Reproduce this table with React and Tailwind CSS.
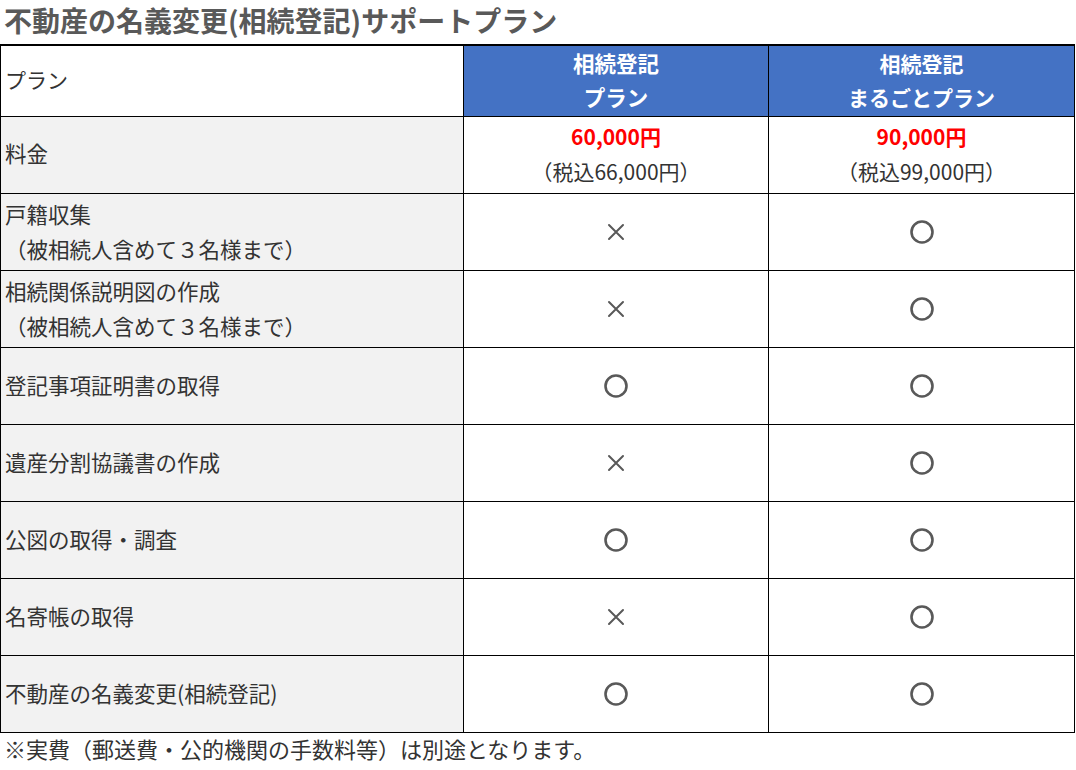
const ROWS = [
  { label: ['戸籍収集', '（被相続人含めて３名様まで）'], a: 'x', b: 'o' },
  { label: ['相続関係説明図の作成', '（被相続人含めて３名様まで）'], a: 'x', b: 'o' },
  { label: ['登記事項証明書の取得'], a: 'o', b: 'o' },
  { label: ['遺産分割協議書の作成'], a: 'x', b: 'o' },
  { label: ['公図の取得・調査'], a: 'o', b: 'o' },
  { label: ['名寄帳の取得'], a: 'x', b: 'o' },
  { label: ['不動産の名義変更(相続登記)'], a: 'o', b: 'o' },
]

function Mark({ type }) {
  if (type === 'o') {
    return (
      <svg width="26" height="26" viewBox="0 0 26 26">
        <circle cx="13" cy="13" r="10.5" fill="none" stroke="#595959" strokeWidth="2.6" />
      </svg>
    )
  }
  return (
    <svg width="20" height="20" viewBox="0 0 20 20">
      <path d="M3 3 L17 17 M17 3 L3 17" stroke="#595959" strokeWidth="2" strokeLinecap="round" />
    </svg>
  )
}

export default function App() {
  return (
    <div
      className="w-[1076px] h-[770px] bg-white text-[#333]"
      style={{ fontFamily: '"Noto Sans CJK JP", "Noto Sans", sans-serif' }}
    >
      <h1 className="h-[44px] pl-[4px] pt-[1px] text-[28px] leading-[38px] font-bold text-[#595959]">
        不動産の名義変更(相続登記)サポートプラン
      </h1>

      <div className="w-[1075px] border-t-2 border-x border-black">
        {/* ヘッダー */}
        <div className="grid grid-cols-[462px_305px_1fr] h-[71px] border-b border-black overflow-hidden">
          <div className="bg-white flex items-center pl-[4px] pb-[2px] text-[21px]">プラン</div>
          <div className="bg-[#4472c4] border-l border-black flex flex-col items-center justify-center pb-[2px] text-white font-bold text-[21.5px] leading-[34px]">
            <span>相続登記</span>
            <span>プラン</span>
          </div>
          <div className="bg-[#4472c4] border-l border-black flex flex-col items-center justify-center pb-[2px] text-white font-bold text-[21px] leading-[34px]">
            <span>相続登記</span>
            <span>まるごとプラン</span>
          </div>
        </div>

        {/* 料金 */}
        <div className="grid grid-cols-[462px_305px_1fr] h-[77px] border-b border-black">
          <div className="bg-[#f2f2f2] flex items-center pl-[4px] pb-[3px] text-[21.5px]">料金</div>
          <div className="border-l border-black flex flex-col items-center justify-center pb-[3px] text-[21px] leading-[35px]">
            <span className="text-[#ff0000] font-bold">60,000円</span>
            <span>（税込66,000円）</span>
          </div>
          <div className="border-l border-black flex flex-col items-center justify-center pb-[3px] text-[21px] leading-[35px]">
            <span className="text-[#ff0000] font-bold">90,000円</span>
            <span>（税込99,000円）</span>
          </div>
        </div>

        {ROWS.map((r, i) => (
          <div key={i} className="grid grid-cols-[462px_305px_1fr] h-[77px] border-b border-black">
            <div className="bg-[#f2f2f2] flex flex-col justify-center pl-[4px] pb-[3px] text-[21.5px] leading-[35px]">
              {r.label.map((l, j) => (
                <span key={j}>{l}</span>
              ))}
            </div>
            <div className="border-l border-black flex items-center justify-center">
              <Mark type={r.a} />
            </div>
            <div className="border-l border-black flex items-center justify-center">
              <Mark type={r.b} />
            </div>
          </div>
        ))}
      </div>

      <p className="pl-[4px] text-[22px] leading-[30px]">※実費（郵送費・公的機関の手数料等）は別途となります。</p>
    </div>
  )
}
